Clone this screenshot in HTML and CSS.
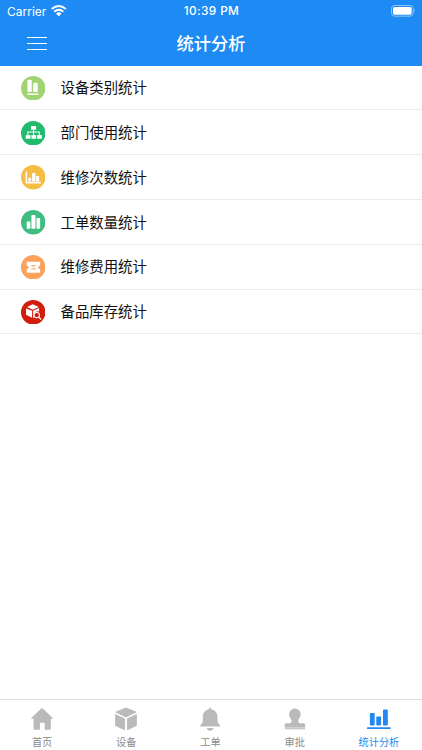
FILE: index.html
```html
<!DOCTYPE html>
<html lang="zh-CN">
<head>
<meta charset="utf-8">
<title>统计分析</title>
<link rel="stylesheet" href="styles.css">
</head>
<body>
<div class="app">
  <header class="header">
    <div class="status">
      <div class="carrier"><span>Carrier</span>
        <svg class="wifi" viewBox="0 0 46 34"><g fill="none" stroke="#fff" stroke-width="5.5"><path d="M2 12Q23-6 44 12"/><path d="M9.500 20Q23 8 36.500 20"/></g><path fill="#fff" d="M15 25Q23 18 31 25L23 34z"/></svg>
      </div>
      <div class="clock">10:39 PM</div>
      <svg class="battery" viewBox="0 0 75 36"><rect x="1.500" y="1.500" width="65" height="32" rx="9" fill="none" stroke="#8fc5fb" stroke-width="3"/><rect x="6" y="6" width="56" height="23" rx="5" fill="#fff"/><path fill="#8fc5fb" d="M70 12q5 5.500 0 11z"/></svg>
    </div>
    <div class="navbar">
      <button class="menu" aria-label="菜单"><i></i><i></i><i></i></button>
      <h1>统计分析</h1>
    </div>
  </header>
  <main class="list">
    <div class="row"><svg viewBox="0 0 73 73"><circle cx="36.500" cy="36.500" r="36.500" fill="#a0d472"/><g fill="#fff"><rect x="19" y="11" width="13" height="37" rx="4"/><rect x="36" y="20" width="14" height="28" rx="4"/><rect x="19" y="52" width="33" height="4.500"/></g></svg><span>设备类别统计</span></div>
    <div class="row"><svg viewBox="0 0 73 73"><circle cx="36.500" cy="36.500" r="36.500" fill="#22bb6b"/><path d="M37.500 24v20M20.500 44V33h34v11" fill="none" stroke="#fff" stroke-width="3"/><g fill="#fff"><rect x="30" y="15" width="15" height="11" rx="1"/><rect x="14" y="42" width="14" height="11" rx="1"/><rect x="31" y="42" width="14" height="11" rx="1"/><rect x="48" y="42" width="14" height="11" rx="1"/></g></svg><span>部门使用统计</span></div>
    <div class="row"><svg viewBox="0 0 73 73"><circle cx="36.500" cy="36.500" r="36.500" fill="#f5bd42"/><path d="M16 20v32.500H59" fill="none" stroke="#fff" stroke-width="4.500"/><g fill="#fff"><rect x="22" y="38" width="8" height="11"/><rect x="33" y="24" width="10" height="25"/><rect x="45" y="33" width="9" height="16"/></g></svg><span>维修次数统计</span></div>
    <div class="row"><svg viewBox="0 0 73 73"><circle cx="36.500" cy="36.500" r="36.500" fill="#40bc81"/><g fill="#fff"><rect x="17" y="34" width="11" height="22" rx="2"/><rect x="31" y="15" width="12" height="41" rx="2"/><rect x="46" y="24" width="11" height="32" rx="2"/></g></svg><span>工单数量统计</span></div>
    <div class="row"><svg viewBox="0 0 73 73"><circle cx="36.500" cy="36.500" r="36.500" fill="#fba25d"/><path fill="#fff" d="M17 20h40v11q-6 1-6 5.500t6 5.500v11H17V42q6-1 6-5.500T17 31z"/><path d="M31 31.500h13M31 41.500h13" fill="none" stroke="#fba25d" stroke-width="3"/><path d="M37.500 32v9" stroke="#fdc69b" stroke-width="3"/></svg><span>维修费用统计</span></div>
    <div class="row"><svg viewBox="0 0 73 73"><circle cx="36.500" cy="36.500" r="36.500" fill="#d11f0b"/><path fill="#fff" d="m18 21 17-8 18 8-18 8zM15 25l18 7v21l-18-9zM36 32l18-8v10a13 13 0 0 0-15 18l-3 2z"/><circle cx="47" cy="45" r="8" fill="none" stroke="#fff" stroke-width="3"/><path d="m53 51 7 7" stroke="#fff" stroke-width="3.500"/></svg><span>备品库存统计</span></div>
  </main>
  <nav class="tabs">
    <div class="tab"><svg viewBox="0 0 75 75"><path fill="#bababa" d="M35 5q2.500-2 5 0l31 29q2 3-1 3h-5v31q0 3-3 3H46V51q0-2-2-2H33q-2 0-2 2v20H14q-3 0-3-3V37H6q-4 0-2-3z"/></svg><span>首页</span></div>
    <div class="tab"><svg viewBox="0 0 75 75"><g fill="#bababa" stroke="#bababa" stroke-width="3" stroke-linejoin="round"><path d="M37.500 3 69 16 37.500 31 6 16z"/><path d="m5 24 28 13v34L5 58zM70 24 42 37v34l28-13z"/></g></svg><span>设备</span></div>
    <div class="tab"><svg viewBox="0 0 75 75"><path fill="#bababa" d="M35 2q2.500-3 5 0v5c14 2 21 12 21 25v12q0 8 8 14v3H7v-3q8-6 8-14V32C15 19 22 9 35 7zM27 66h22q-3 9-11 9t-11-9z"/></svg><span>工单</span></div>
    <div class="tab"><svg viewBox="0 0 75 75"><path fill="#bababa" d="M37.500 5a18 18 0 0 1 18 18c0 9-8 15-8 20q0 8 8 8h9q5 0 5 5v8H5v-8q0-5 5-5h9q8 0 8-8c0-5-8-11-8-20A18 18 0 0 1 37.500 5z"/><path fill="#cacaca" d="M6 64h63v6H6z"/></svg><span>审批</span></div>
    <div class="tab active"><svg viewBox="0 0 75 75"><g fill="#2388ef"><rect x="9" y="19" width="15" height="39" rx="3"/><rect x="29" y="30" width="15" height="28" rx="3"/><rect x="50" y="8" width="15" height="50" rx="3"/><rect x="0" y="63" width="74" height="6" rx="2"/></g></svg><span>统计分析</span></div>
  </nav>
</div>
</body>
</html>
```
FILE: styles.css
```css
* { box-sizing: border-box; }
body { margin: 0; background: #fff; color: #111; font-family: "Liberation Sans", "Noto Sans CJK SC", sans-serif; }
.app { height: 750px; display: flex; flex-direction: column; overflow: hidden; }
.header { height: 65.600px; background: #1e8af3; color: #fff; flex: none; }
.status { height: 22px; display: grid; grid-template-columns: 1fr auto 1fr; align-items: center; padding: 0 6px 0 7px; font-family: Inter, sans-serif; font-size: 12px; }
.carrier { display: flex; align-items: center; gap: 5px; }
.wifi { width: 15.500px; height: 11.500px; }
.clock { font-size: 11.800px; font-weight: 500; letter-spacing: .4px; }
.battery { justify-self: end; width: 25px; height: 12px; }
.navbar { height: 43px; display: grid; grid-template-columns: 60px 1fr 60px; align-items: center; }
.menu { display: flex; flex-direction: column; gap: 5px; width: 20.500px; margin-left: 26.500px; padding: 0; border: 0; background: none; }
.menu i { height: 1px; width: 100%; background: #fff; }
h1 { margin: 0; text-align: center; font-size: 17.300px; font-weight: 500; line-height: 26px; }
.list { flex: 1; }
.row { height: 44.800px; display: flex; align-items: center; gap: 15.500px; padding-left: 20.500px; border-bottom: 1px solid #ebebeb; font-size: 14.400px; line-height: 20px; }
.row svg { width: 24.500px; height: 24.500px; margin-top: 1px; }
.row span { padding-top: 1.500px; }
.tabs { height: 51px; flex: none; display: grid; grid-template-columns: repeat(5, 1fr); padding-right: 1px; border-top: 1px solid #dedede; }
.tab { display: flex; flex-direction: column; align-items: center; padding-top: 7px; font-size: 10.200px; line-height: 15px; color: #8c8c8c; }
.tab svg { width: 24px; height: 24px; margin-bottom: 4px; }
.tab.active { color: #2388ef; }
```
